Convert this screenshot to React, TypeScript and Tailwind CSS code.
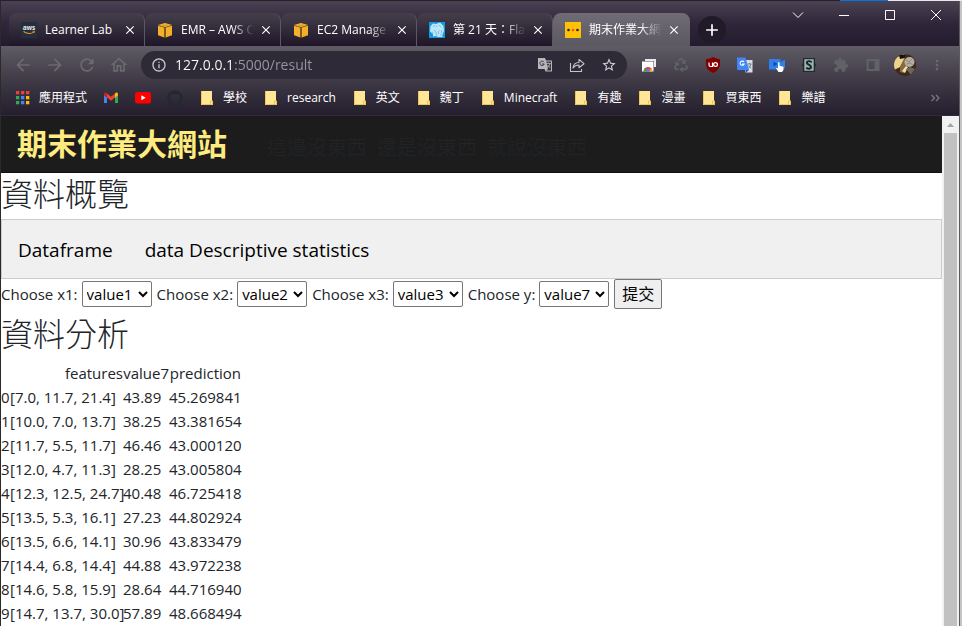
import type { ReactNode } from "react";
import {
  MdAdd,
  MdArrowBack,
  MdArrowForward,
  MdClose,
  MdExtension,
  MdInfoOutline,
  MdMoreVert,
  MdOutlineHome,
  MdRefresh,
  MdStarBorder,
} from "react-icons/md";
import { FaGithub, FaRecycle } from "react-icons/fa";

const AwsIcon = () => (
  <svg viewBox="0 0 16 16" className="size-4">
    <rect width="16" height="16" fill="#232f3e" />
    <text x="8" y="8" textAnchor="middle" fontSize="6.5" fontWeight="700" fill="#e8e8e8" fontFamily="Open Sans, sans-serif">aws</text>
    <path d="M2.5 9.5q5.500 3.600 10.500 .6" fill="none" stroke="#f59a23" strokeWidth="1.100" />
    <path d="M11.500 9.300l2 -.1l-.5 1.800" fill="none" stroke="#f59a23" strokeWidth=".8" />
  </svg>
);

const CubeIcon = () => (
  <svg viewBox="0 0 16 16" className="size-4">
    <path d="M1 3L8 1l7 2-7 2.200z" fill="#f9bd33" />
    <path d="M1 3.500l6.300 1.900V15.500L1 13.200z" fill="#f5b02a" />
    <path d="M15 3.500L8.700 5.400V15.500L15 13.200z" fill="#f5b02a" />
    <path d="M7.300 5.200h1.400v10.300H7.300z" fill="#8a6220" />
    <path d="M1 3.300l7 2 7-2" stroke="#8a6220" strokeWidth=".7" fill="none" />
    <path d="M4.500 2.200l7 2M11.500 2.200l-7 2" stroke="#c98f22" strokeWidth=".5" />
  </svg>
);

const IronmanIcon = () => (
  <svg viewBox="0 0 16 16" className="size-4">
    <rect width="16" height="16" fill="#0f9be4" />
    <path d="M1.500 4L4 1.500l3 .5 4-1.500 3.500 3.500.5 5-1.500 3.500V15H9l-2-1-3 .5V12L1 9.500z" fill="#bfe6f8" />
    <path d="M4 4.500l2-1M7 3.500l1 1.500M10 3l2.500 2.500M12.500 8v3M5 8l2 2 .5 3.500M3 10l1.500 1M10 8.500l-1 4M11 13h2" stroke="#4fb3e3" strokeWidth=".7" fill="none" />
  </svg>
);

const FlaskSiteIcon = () => (
  <svg viewBox="0 0 16 16" className="size-4">
    <rect width="16" height="16" fill="#ffc107" />
    <circle cx="3.500" cy="8" r="1.300" fill="#222" />
    <circle cx="8" cy="8" r="1.300" fill="#f4511e" />
    <circle cx="12.500" cy="8" r="1.300" fill="#222" />
  </svg>
);

const AppsIcon = () => {
  const colors = ["#ea4335", "#ea4335", "#ea4335", "#34a853", "#4285f4", "#fbbc04", "#34a853", "#4285f4", "#fbbc04"];
  return (
    <svg viewBox="0 0 16 16" className="size-4">
      {colors.map((c, i) => (
        <rect key={i} x={1 + (i % 3) * 5} y={1 + Math.floor(i / 3) * 5} width="3.300" height="3.300" fill={c} />
      ))}
    </svg>
  );
};

const GmailIcon = () => (
  <svg viewBox="0 0 16 16" className="size-4">
    <path d="M1 4v9h3V7z" fill="#4285f4" />
    <path d="M15 4v9h-3V7z" fill="#34a853" />
    <path d="M4 3.500l4 3.200 4-3.200v4L8 10.700 4 7.500z" fill="#ea4335" />
    <path d="M1 4.200C1 2.500 2.800 2 4 3.200v4.500L1 5.500z" fill="#c5221f" />
    <path d="M15 4.200C15 2.500 13.200 2 12 3.200v4.500l3-2.200z" fill="#fbbc04" />
  </svg>
);

const YoutubeIcon = () => (
  <svg viewBox="0 0 16 16" className="size-4">
    <rect y="2" width="16" height="11.500" rx="2.500" fill="#f00" />
    <path d="M6.300 5.200v5l4.400-2.500z" fill="#fff" />
  </svg>
);

const FolderIcon = () => (
  <svg viewBox="0 0 16 16" className="size-4">
    <path d="M2 1h11v9.500l1 .5v4H2z" fill="#ffe694" />
    <path d="M2.500 1v13.500H13M11.500 15v-4h2v4" fill="none" stroke="#e9bf45" strokeWidth=".8" />
  </svg>
);

const TranslatePageIcon = () => (
  <svg viewBox="0 0 16 16" className="size-4">
    <path d="M1 1h7l1 2.500h5.500c.3 0 .5.200.5.500v10c0 .3-.2.500-.5.500H8.500L7.500 12H1.500C1.200 12 1 11.800 1 11.500z" fill="#b9b7bc" />
    <path d="M9.400 4.500H14v9H9.500l1.500-2z" fill="#38333f" />
    <path d="M7 5.200A2.200 2.200 0 1 0 7.200 7H5" fill="none" stroke="#38333f" strokeWidth="1" />
    <path d="M9.700 6.500h4M11.700 5.500v1M13 6.500q-.6 2.500-2.600 4M10.800 8l2.500 3" stroke="#b9b7bc" strokeWidth=".8" fill="none" />
  </svg>
);

const ShareIcon = () => (
  <svg viewBox="0 0 16 16" className="size-4" fill="none" stroke="#c6c4c9" strokeWidth="1.100">
    <path d="M1.500 6v8.500h11V12" />
    <path d="M4 11q.5-5.500 6-5.500V2.500l5 4.200-5 4V8Q6 8 4 11z" strokeLinejoin="round" />
  </svg>
);

const RemoteDesktopIcon = () => (
  <svg viewBox="0 0 16 16" className="size-4">
    <path d="M4 2h11v8h-2V4H4z" fill="#e8eaed" />
    <rect x="1" y="4.500" width="11.500" height="10" fill="#fff" />
    <path d="M2.500 14.500a4.500 4.500 0 0 1 9 0z" fill="#ea4335" />
    <path d="M2.500 14.500a4.500 4.500 0 0 1 1.500-3.200l2 3.200z" fill="#34a853" />
    <path d="M11.500 14.500a4.500 4.500 0 0 0-1.500-3.200l-2 3.200z" fill="#fbbc04" />
    <circle cx="7" cy="13.500" r="1.700" fill="#4285f4" />
  </svg>
);

const UblockIcon = () => (
  <svg viewBox="0 0 16 16" className="size-4">
    <path d="M8 0q3 2 7 2.200v5Q15 13 8 16 1 13 1 7.200v-5Q5 2 8 0z" fill="#800000" />
    <path d="M4 5.500V8q0 1.500 1.500 1.500H7.500V5.500" fill="none" stroke="#fff" strokeWidth="1.200" />
    <circle cx="10.500" cy="7.500" r="1.900" fill="none" stroke="#fff" strokeWidth="1.200" />
  </svg>
);

const GoogleTranslateIcon = () => (
  <svg viewBox="0 0 16 16" className="size-4">
    <path d="M6 3h9.500v12.500H8.500z" fill="#dadce0" />
    <path d="M0 .5h8.500L12 13H1Q0 13 0 12z" fill="#4285f4" />
    <path d="M8.300 13H12l-3 2.700z" fill="#2a56c6" />
    <path d="M7 5A2.100 2.100 0 1 0 7.200 7H5" fill="none" stroke="#fff" strokeWidth="1.100" />
    <path d="M10.500 7h4M12.500 6v1M14 7q-.5 2.500-2.300 4M11.500 8.500l2.500 3" stroke="#607d8b" strokeWidth=".9" fill="none" />
  </svg>
);

const VideoTouchIcon = () => (
  <svg viewBox="0 0 16 16" className="size-4">
    <path d="M0 2h11.500v3L16 2.500v9L11.500 10v2.500H0z" fill="#2f80ed" />
    <path d="M4.500 4.500v5L8.500 7z" fill="#174a9b" />
    <path d="M9 5.500q1-.8 1.600.2v3l3.900 1v3.300L13 15h-3.500L7 11.200q.8-1 2 .3z" fill="#fff" />
  </svg>
);

const StylusIcon = () => (
  <svg viewBox="0 0 16 16" className="size-4">
    <path d="M2 1h12v5l1 2-1 2v5H2v-5L1 8l1-2z" fill="#1f2a2c" />
    <path d="M3.300 2.200h9.400v11.600H3.300z" fill="#9bb3b5" />
    <path d="M10.800 5.200Q8 3.400 6.200 4.700 5 6.400 7.800 7.700T9.800 11.100Q8 12.600 5.200 10.900" fill="none" stroke="#1b2424" strokeWidth="1.900" />
  </svg>
);

const SidePanelIcon = () => (
  <svg viewBox="0 0 16 16" className="size-4">
    <path d="M1.500 2h13v12h-13zM3.500 4v8h6V4z" fill="#5f6368" fillRule="evenodd" />
  </svg>
);

const AvatarIcon = () => (
  <svg viewBox="0 0 22 22" className="size-[22px] shrink-0">
    <clipPath id="avatar-clip">
      <circle cx="11" cy="11" r="11" />
    </clipPath>
    <g clipPath="url(#avatar-clip)">
      <rect width="22" height="22" fill="#3c2b1c" />
      <path d="M0 5L9 0h4L6 13 0 16z" fill="#ecd38c" />
      <path d="M5 1l8-1-2 4-5 1z" fill="#19130f" />
      <path d="M6 13l4-8 3 3-3 11-4-1z" fill="#8b6b3e" />
      <path d="M8 17l4-5 2 1-3 6z" fill="#f0dfb5" />
      <circle cx="15.500" cy="8" r="5" fill="#b5ada2" />
      <path d="M12 6l3 2 3-3M13 10l3-1 3 2" stroke="#8a7f74" strokeWidth=".8" fill="none" />
      <path d="M12 15l4-2 5 2-4 6z" fill="#6f655b" />
    </g>
  </svg>
);

const tabs: { title: string; icon: ReactNode; active?: boolean }[] = [
  { title: "Learner Lab", icon: <AwsIcon /> },
  { title: "EMR – AWS C", icon: <CubeIcon /> },
  { title: "EC2 Manage", icon: <CubeIcon /> },
  { title: "第 21 天：Fla", icon: <IronmanIcon /> },
  { title: "期末作業大網", icon: <FlaskSiteIcon />, active: true },
];

const bookmarks: { label?: string; name: string; icon: ReactNode }[] = [
  { label: "應用程式", name: "應用程式", icon: <AppsIcon /> },
  { name: "Gmail", icon: <GmailIcon /> },
  { name: "YouTube", icon: <YoutubeIcon /> },
  { name: "GitHub", icon: <FaGithub className="size-4 text-[#24292e]" /> },
  ...["學校", "research", "英文", "魏丁", "Minecraft", "有趣", "漫畫", "買東西", "樂譜"].map((label) => ({
    label,
    name: label,
    icon: <FolderIcon />,
  })),
];

const extensions: { name: string; icon: ReactNode }[] = [
  { name: "Remote Desktop", icon: <RemoteDesktopIcon /> },
  { name: "Recycle", icon: <FaRecycle className="size-[14px] text-[#5f6368]" /> },
  { name: "uBlock", icon: <UblockIcon /> },
  { name: "Translate", icon: <GoogleTranslateIcon /> },
  { name: "Video", icon: <VideoTouchIcon /> },
  { name: "Stylus", icon: <StylusIcon /> },
  { name: "Extensions", icon: <MdExtension className="size-4 text-[#5f6368]" /> },
  { name: "Side panel", icon: <SidePanelIcon /> },
];

const rows = [
  ["[7.0, 11.7, 21.4]", "43.89", "45.269841"],
  ["[10.0, 7.0, 13.7]", "38.25", "43.381654"],
  ["[11.7, 5.5, 11.7]", "46.46", "43.000120"],
  ["[12.0, 4.7, 11.3]", "28.25", "43.005804"],
  ["[12.3, 12.5, 24.7]", "40.48", "46.725418"],
  ["[13.5, 5.3, 16.1]", "27.23", "44.802924"],
  ["[13.5, 6.6, 14.1]", "30.96", "43.833479"],
  ["[14.4, 6.8, 14.4]", "44.88", "43.972238"],
  ["[14.6, 5.8, 15.9]", "28.64", "44.716940"],
  ["[14.7, 13.7, 30.0]", "57.89", "48.668494"],
];

const choices = [
  { id: "x1", value: "value1" },
  { id: "x2", value: "value2" },
  { id: "x3", value: "value3" },
  { id: "y", value: "value7" },
];

const values = ["value1", "value2", "value3", "value4", "value5", "value6", "value7"];

function TabStrip() {
  return (
    <div className="flex h-[45px] items-end bg-linear-to-b from-[#4b4354] via-[#2f2639] to-[#231b2e] pl-2">
      {tabs.map((tab) => (
        <div
          key={tab.title}
          className={
            tab.active
              ? "flex h-[33px] w-[137px] items-center rounded-t-lg bg-linear-to-b from-[#706c75] to-[#5c5862] pr-2 pl-3"
              : "flex h-[33px] w-[136px] items-center rounded-t-lg border-r border-[#5c5665] bg-linear-to-b from-[#453f4b] to-[#1f1729] pr-1.5 pl-3"
          }
        >
          <button className="flex min-w-0 flex-1 items-center gap-2 text-left">
            <span className="shrink-0">{tab.icon}</span>
            <span
              className={
                tab.title === "Learner Lab"
                  ? "flex-1 text-xs whitespace-nowrap text-white"
                  : "flex-1 text-xs whitespace-nowrap text-white [mask-image:linear-gradient(to_right,black_70%,transparent)]"
              }
            >
              {tab.title}
            </span>
          </button>
          <button aria-label="Close tab" className="ml-1 flex size-4 items-center justify-center">
            <MdClose className="size-[14px] text-white" />
          </button>
        </div>
      ))}
      <button aria-label="New tab" className="mb-0.5 ml-2 flex size-7 items-center justify-center rounded-full bg-[#211a28]">
        <MdAdd className="size-5 text-white" />
      </button>
      <div className="ml-auto flex self-start text-white">
        {[
          ["Search tabs", "M3 5.500l5 5 5-5"],
          ["Minimize", "M3 8.500h10"],
          ["Maximize", "M3.500 3.500h9v9h-9z"],
          ["Close", "M3 3l10 10M13 3L3 13"],
        ].map(([name, d]) => (
          <button key={name} aria-label={name} className="flex h-7 w-[46px] items-center justify-center">
            <svg viewBox="0 0 16 16" className="size-4" fill="none" stroke="currentColor">
              <path d={d} />
            </svg>
          </button>
        ))}
      </div>
    </div>
  );
}

function Toolbar() {
  return (
    <div className="flex h-[38px] items-center pr-3.5 pl-3">
      <div className="flex gap-3 text-[#6a6a70]">
        <button aria-label="Back"><MdArrowBack className="size-5" /></button>
        <button aria-label="Forward"><MdArrowForward className="size-5" /></button>
        <button aria-label="Reload"><MdRefresh className="size-5" /></button>
        <button aria-label="Home"><MdOutlineHome className="size-5" /></button>
      </div>
      <div className="ml-3 flex h-7 flex-1 items-center rounded-full bg-[#2f2a38] px-2.5">
        <MdInfoOutline className="size-4 shrink-0 text-[#c6c4c9]" />
        <input
          aria-label="Address"
          defaultValue="127.0.0.1:5000/result"
          className="ml-2 min-w-0 flex-1 bg-linear-to-r from-white from-[58px] to-[#9a97a0] to-[58px] bg-clip-text text-sm text-transparent outline-none"
        />
        <div className="flex items-center gap-4">
          <button aria-label="Translate this page"><TranslatePageIcon /></button>
          <button aria-label="Share"><ShareIcon /></button>
          <button aria-label="Bookmark"><MdStarBorder className="size-4 text-[#d3d1d6]" /></button>
        </div>
      </div>
      <div className="ml-3.5 flex items-center gap-4">
        {extensions.map((ext) => (
          <button key={ext.name} aria-label={ext.name} className="flex size-4 items-center justify-center">
            {ext.icon}
          </button>
        ))}
        <button aria-label="Profile" className="flex size-4 items-center justify-center"><AvatarIcon /></button>
        <button aria-label="Menu"><MdMoreVert className="size-4 text-[#6a6a70]" /></button>
      </div>
    </div>
  );
}

function BookmarkBar() {
  return (
    <nav className="flex h-[31px] items-center gap-4 pr-4 pb-1 pl-3.5 text-xs text-white">
      {bookmarks.map((b) => (
        <a key={b.name} href="#" aria-label={b.name} className="flex shrink-0 items-center gap-2 whitespace-nowrap">
          {b.icon}
          {b.label}
        </a>
      ))}
      <button aria-label="More bookmarks" className="ml-auto">
        <svg viewBox="0 0 16 16" className="size-4" fill="none" stroke="#7b7780" strokeWidth="1.300">
          <path d="M4.500 5l3 3-3 3M9 5l3 3-3 3" />
        </svg>
      </button>
    </nav>
  );
}

function ResultPage() {
  return (
    <main className="min-w-0 flex-1 overflow-hidden bg-white text-[15px] leading-6 text-[#212529]">
      <header className="flex h-[57px] items-center border-b border-[#111] bg-[#1c1c1c] pl-4">
        <a href="#" className="text-3xl font-bold text-[#ffec80]">期末作業大網站</a>
        <div className="mt-2 ml-10 flex gap-2.5 text-xl font-light text-[#212529]">
          <a href="#">這邊沒東西</a>
          <a href="#">還是沒東西</a>
          <a href="#">就說沒東西</a>
        </div>
      </header>
      <h2 className="pt-0.5 pb-1.5 text-[32px] leading-[38px] font-light">資料概覽</h2>
      <nav className="flex h-[60px] items-center border border-[#ccc] bg-[#f0f0f0] pt-0.5 text-[19px] text-black">
        <a href="#" className="px-4">Dataframe</a>
        <a href="#" className="px-4">data Descriptive statistics</a>
      </nav>
      <form className="flex h-[30px] items-center gap-[5px]">
        {choices.map((c) => (
          <div key={c.id} className="flex items-center gap-1">
            <label htmlFor={c.id}>Choose {c.id}:</label>
            <select
              id={c.id}
              defaultValue={c.value}
              className="h-[26px] w-[70px] rounded-xs border border-[#767676] bg-white text-[15px] text-black"
            >
              {values.map((v) => (
                <option key={v}>{v}</option>
              ))}
            </select>
          </div>
        ))}
        <button type="button" className="h-[30px] w-12 rounded-xs border border-[#767676] bg-[#efefef] text-base text-black">
          提交
        </button>
      </form>
      <h2 className="pt-1.5 pb-2 text-[32px] leading-[38px] font-light">資料分析</h2>
      <table className="w-[240px] table-fixed whitespace-nowrap">
        <thead>
          <tr>
            <th className="w-[9px]" />
            <th className="w-[113px] text-right font-normal">features</th>
            <th className="w-[46px] text-right font-normal">value7</th>
            <th className="w-[72px] text-right font-normal">prediction</th>
          </tr>
        </thead>
        <tbody>
          {rows.map((row, i) => (
            <tr key={i}>
              <th className="text-left font-normal">{i}</th>
              {row.map((cell) => (
                <td key={cell}>{cell}</td>
              ))}
            </tr>
          ))}
        </tbody>
      </table>
    </main>
  );
}

export default function App() {
  return (
    <div className="flex h-screen flex-col overflow-hidden bg-[#2a2a2a] font-['Open_Sans','Noto_Sans_CJK_TC',sans-serif]">
      <div className="flex h-px shrink-0 justify-end bg-[#26222b]">
        <div className="w-12 bg-[#0078d7]" />
        <div className="w-[74px] bg-[#e8e8e8]" />
      </div>
      <div className="flex min-h-0 flex-1 pl-px">
        <div className="flex min-w-0 flex-1 flex-col">
          <TabStrip />
          <div className="shrink-0 border-b border-[#2f2b3a] bg-linear-to-b from-[#605c66] via-[#3f3a46] to-[#241e2e]">
            <Toolbar />
            <BookmarkBar />
          </div>
          <div className="flex min-h-0 flex-1">
            <ResultPage />
            <div className="flex w-[17px] shrink-0 flex-col items-center bg-[#f1f1f1]">
              <svg viewBox="0 0 17 17" className="size-[17px] shrink-0">
                <path d="M5 11h7L8.500 7z" fill="#a3a3a3" />
              </svg>
              <div className="w-[13px] flex-1 bg-[#c1c1c1]" />
            </div>
          </div>
        </div>
        <div className="w-[3px] border-l border-[#5a5a5a] bg-[#c4c4c4]" />
      </div>
    </div>
  );
}
